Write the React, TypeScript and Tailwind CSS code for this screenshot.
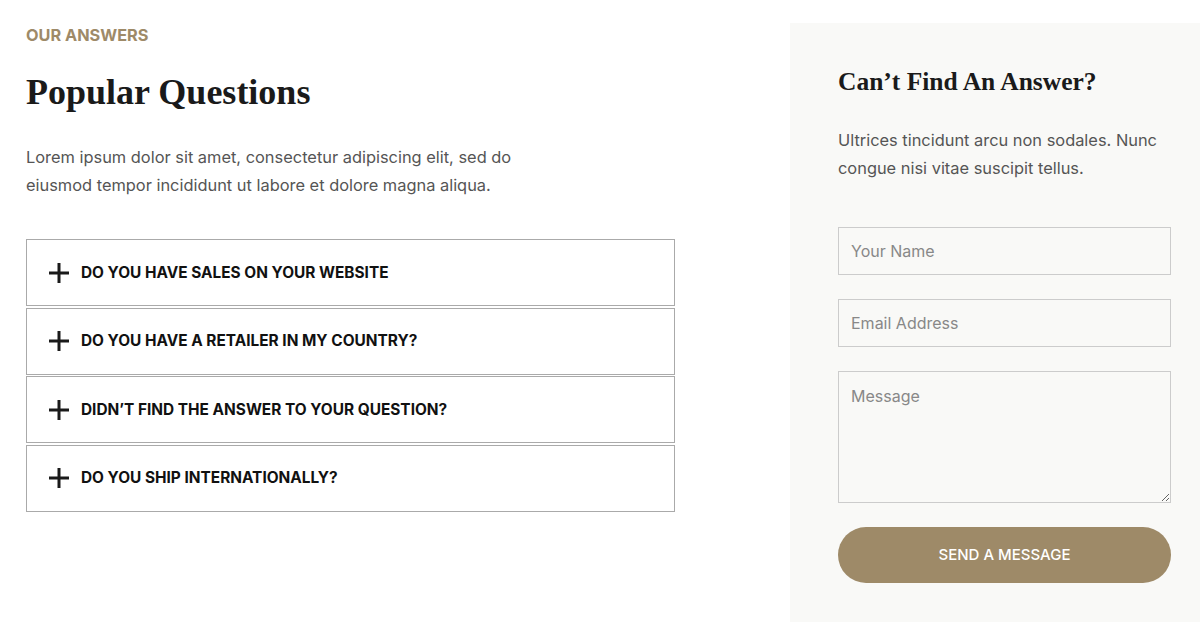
const questions = [
  "Do you have sales on your website",
  "Do you have a retailer in my country?",
  "Didn’t find the answer to your question?",
  "Do you ship internationally?",
];

const PlusIcon = () => (
  <svg width="20" height="20" viewBox="0 0 20 20" className="shrink-0 text-[#1a1a1a]">
    <rect x="8.5" y="0" width="3" height="20" fill="currentColor" />
    <rect x="0" y="8.5" width="20" height="3" fill="currentColor" />
  </svg>
);

const App = () => {
  return (
    <div className="flex w-[1200px] h-[632px] bg-white font-['Inter','Liberation_Sans',sans-serif] overflow-hidden">
      <section className="w-[790px] pl-[26px] pt-[26px]">
        <p className="text-[16.3px] leading-[18px] font-bold uppercase text-[#9e8a68]">Our Answers</p>
        <h2 className="mt-[26px] text-[36px] leading-[44px] font-bold text-[#1a1a1a] font-['Liberation_Serif',serif]">
          Popular Questions
        </h2>
        <p className="mt-[29px] w-[530px] text-[16.4px] leading-[28px] text-[#555]">
          Lorem ipsum dolor sit amet, consectetur adipiscing elit, sed do eiusmod tempor incididunt ut labore et
          dolore magna aliqua.
        </p>
        <div className="mt-[40px] w-[649px] flex flex-col gap-[1.5px]">
          {questions.map((q) => (
            <button
              key={q}
              type="button"
              className="flex items-center gap-[12px] h-[67px] px-[22px] border border-[#aaa] bg-white text-left"
            >
              <PlusIcon />
              <span className="text-[15.4px] font-bold uppercase text-[#111]">{q}</span>
            </button>
          ))}
        </div>
      </section>
      <aside className="mt-[23px] h-[599px] w-[410px] bg-[#f9f9f7] pl-[48px] pr-[29px] pt-[42px]">
        <h3 className="text-[25.5px] leading-[34px] font-bold text-[#1a1a1a] font-['Liberation_Serif',serif]">
          Can’t Find An Answer?
        </h3>
        <p className="mt-[27px] text-[16.4px] leading-[28px] text-[#555]">
          Ultrices tincidunt arcu non sodales. Nunc congue nisi vitae suscipit tellus.
        </p>
        <form className="mt-[45px] flex flex-col gap-[24px]">
          <input
            type="text"
            placeholder="Your Name"
            className="h-[48px] w-full border border-[#ccc] bg-transparent px-[12px] text-[16px] placeholder:text-[#888] outline-none"
          />
          <input
            type="email"
            placeholder="Email Address"
            className="h-[48px] w-full border border-[#ccc] bg-transparent px-[12px] text-[16px] placeholder:text-[#888] outline-none"
          />
          <textarea
            placeholder="Message"
            className="h-[132px] w-full border border-[#ccc] bg-transparent px-[12px] py-[12px] text-[16px] placeholder:text-[#888] outline-none"
          />
          <button
            type="button"
            className="h-[56px] w-full rounded-full bg-[#9e8a68] text-[15px] font-medium uppercase text-white"
          >
            Send a Message
          </button>
        </form>
      </aside>
    </div>
  );
};

export default App;
